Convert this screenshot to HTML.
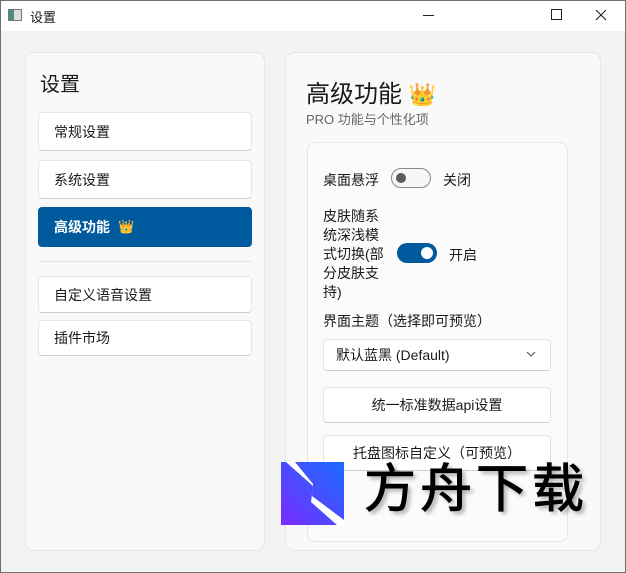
<!DOCTYPE html>
<html><head><meta charset="utf-8"><style>
*{box-sizing:border-box;margin:0;padding:0}
body{width:626px;height:573px;overflow:hidden;background:#f3f3f3;font-family:"Liberation Sans","Noto Sans CJK SC",sans-serif;color:#1a1a1a;position:relative}
.abs{position:absolute}
.tb{left:0;top:0;width:626px;height:31px;background:#fff}
.panel{background:#f9f9f9;border:1px solid #e5e5e5;border-radius:9px}
.item{position:absolute;left:38px;width:214px;background:#fff;border:1px solid #e6e6e6;border-bottom-color:#d0d0d0;border-radius:4px;font-size:14px;padding-left:15px;display:flex;align-items:center}
.btn{position:absolute;left:323px;width:228px;background:#fff;border:1px solid #e3e3e3;border-bottom-color:#ccc;border-radius:4px;font-size:14px;display:flex;align-items:center;justify-content:center}
.t{font-size:14px}
</style></head><body>
<div class="abs tb"></div>
<div class="abs" style="left:0;top:0;width:626px;height:573px;border:1px solid #6e6e6e;z-index:5;pointer-events:none"></div>
<div class="abs" style="left:8px;top:9px;width:14px;height:12px;border:1px solid #777;background:linear-gradient(90deg,#4a8a80 40%,#ddd 40%)"></div>
<div class="abs t" style="left:30px;top:7px;font-size:13px">设置</div>
<div class="abs" style="left:423px;top:15px;width:11px;height:1px;background:#222"></div>
<div class="abs" style="left:551px;top:9px;width:11px;height:11px;border:1px solid #222"></div>
<svg class="abs" style="left:595px;top:9px" width="12" height="12"><path d="M1 1L11 11M11 1L1 11" stroke="#222" stroke-width="1.1"/></svg>

<div class="abs panel" style="left:25px;top:52px;width:240px;height:499px"></div>
<div class="abs" style="left:40px;top:68px;font-size:20px">设置</div>
<div class="item" style="top:112px;height:39px">常规设置</div>
<div class="item" style="top:160px;height:39px">系统设置</div>
<div class="item" style="top:207px;height:40px;background:#005a9e;border-color:#005a9e;color:#fff;font-weight:bold">高级功能 <span style="margin-left:8px;font-size:13px">👑</span></div>
<div class="abs" style="left:38px;top:261px;width:214px;height:1px;background:#e5e5e5"></div>
<div class="item" style="top:276px;height:37px">自定义语音设置</div>
<div class="item" style="top:320px;height:36px">插件市场</div>

<div class="abs panel" style="left:285px;top:52px;width:316px;height:499px"></div>
<div class="abs" style="left:306px;top:74px;font-size:24px">高级功能 <span style="font-size:22px">👑</span></div>
<div class="abs" style="left:306px;top:109px;font-size:13px;color:#666">PRO 功能与个性化项</div>
<div class="abs" style="left:307px;top:142px;width:261px;height:400px;background:#fbfbfb;border:1px solid #e5e5e5;border-radius:8px"></div>
<div class="abs t" style="left:323px;top:170px">桌面悬浮</div>
<div class="abs" style="left:391px;top:168px;width:40px;height:20px;border:1px solid #888;border-radius:10px;background:#f6f6f6"></div>
<div class="abs" style="left:396px;top:173px;width:10px;height:10px;border-radius:5px;background:#5c5c5c"></div>
<div class="abs t" style="left:443px;top:170px">关闭</div>
<div class="abs t" style="left:323px;top:207px;line-height:19px;white-space:nowrap">皮肤随系<br>统深浅模<br>式切换(部<br>分皮肤支<br>持)</div>
<div class="abs" style="left:397px;top:243px;width:40px;height:20px;border-radius:10px;background:#005a9e"></div>
<div class="abs" style="left:421px;top:247px;width:12px;height:12px;border-radius:6px;background:#fff"></div>
<div class="abs t" style="left:449px;top:245px">开启</div>
<div class="abs t" style="left:323px;top:311px">界面主题（选择即可预览）</div>
<div class="btn" style="top:339px;height:32px;justify-content:flex-start;padding-left:12px">默认蓝黑 (Default)</div>
<svg class="abs" style="left:526px;top:351px" width="10" height="6"><path d="M1 1L5 5L9 1" stroke="#555" fill="none"/></svg>
<div class="btn" style="top:387px;height:36px">统一标准数据api设置</div>
<div class="btn" style="top:435px;height:36px">托盘图标自定义（可预览）</div>

<svg class="abs" style="left:281px;top:462px" width="66" height="66"><defs><linearGradient id="g" x1="0" y1="1" x2="1" y2="0"><stop offset="0" stop-color="#7a2cff"/><stop offset="1" stop-color="#1a6cff"/></linearGradient></defs><rect width="63" height="63" fill="url(#g)"/><path d="M5 0H14L32 22L31 34L63 58V63H56L30 40L32 24Z" fill="#fff"/></svg>
<div class="abs" style="left:364px;top:458px;font-size:52px;line-height:64px;color:#000;letter-spacing:4px;-webkit-text-stroke:1px #000;text-shadow:3px 3px 4px rgba(0,0,0,.35)">方舟下载</div>
</body></html>
